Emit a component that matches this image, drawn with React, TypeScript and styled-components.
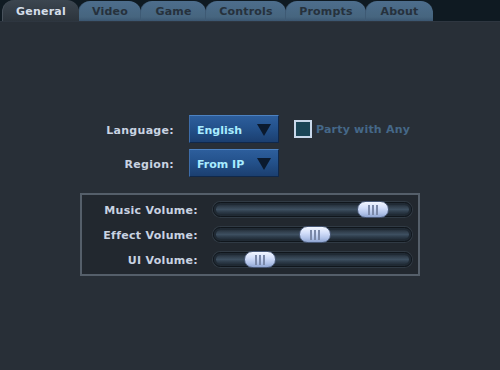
import React from "react";
import styled, { createGlobalStyle } from "styled-components";

const GlobalStyle = createGlobalStyle`
  html, body {
    margin: 0;
    padding: 0;
    background: #282f37;
  }
  body {
    font-family: "DejaVu Sans", Verdana, sans-serif;
  }
`;

const Page = styled.div`
  width: 500px;
  height: 370px;
  background: #282f37;
  overflow: hidden;
`;

const TabBar = styled.div`
  display: flex;
  align-items: flex-end;
  height: 21px;
  padding-left: 2px;
  background: #0f1a22;
  border-bottom: 1px solid #2e3640;
`;

const Tab = styled.div<{ $active?: boolean; $width: number }>`
  display: flex;
  align-items: center;
  justify-content: center;
  width: ${(p) => p.$width}px;
  height: ${(p) => (p.$active ? 21 : 20)}px;
  box-sizing: border-box;
  margin-right: -1px;
  border-radius: 12px 12px 0 0;
  font-size: 11px;
  font-weight: bold;
  letter-spacing: 0.2px;
  color: ${(p) => (p.$active ? "#d4dde8" : "#26313c")};
  background: ${(p) =>
    p.$active
      ? "linear-gradient(#3c4650, #2c343c)"
      : "linear-gradient(#4d6d8c, #46657f 80%, #3b5670)"};
  border-left: 1px solid ${(p) => (p.$active ? "#48525c" : "#3e5a74")};
  z-index: ${(p) => (p.$active ? 2 : 1)};
  padding-top: 1px;
`;

const Content = styled.div`
  padding-top: 93px;
`;

const SettingsGrid = styled.div`
  display: grid;
  grid-template-columns: 174px 90px auto;
  column-gap: 15px;
  row-gap: 6px;
  align-items: center;
`;

const Label = styled.div`
  text-align: right;
  font-size: 11px;
  font-weight: bold;
  letter-spacing: 0.3px;
  color: #c9d3e2;
  padding-top: 2px;
`;

const Dropdown = styled.div`
  position: relative;
  display: flex;
  align-items: center;
  height: 28px;
  box-sizing: border-box;
  padding: 2px 0 0 7px;
  background: linear-gradient(#2d5e9c, #24528c 45%, #1b3f70);
  border: 1px solid #10284a;
  border-top-color: #4d82c0;
  border-left-color: #3d6ca8;
  font-size: 11px;
  font-weight: bold;
  color: #a9ecff;
`;

const Arrow = styled.div`
  position: absolute;
  right: 7px;
  top: 8px;
  width: 0;
  height: 0;
  border-left: 7px solid transparent;
  border-right: 7px solid transparent;
  border-top: 12px solid #0b1a2e;
`;

const CheckRow = styled.label`
  display: flex;
  align-items: center;
  gap: 4px;
  font-size: 11px;
  font-weight: bold;
  letter-spacing: 0.2px;
  color: #456888;
`;

const Checkbox = styled.span`
  width: 18px;
  height: 18px;
  box-sizing: border-box;
  border: 2px solid #c8d8ea;
  background: #1a4556;
`;

const VolumePanel = styled.div`
  margin: 16px 0 0 80px;
  width: 340px;
  height: 83px;
  box-sizing: border-box;
  border: 2px solid #555f6a;
  background: #22282f;
  padding: 7px 0 0 0;
  display: flex;
  flex-direction: column;
  gap: 10px;
`;

const VolumeRow = styled.div`
  display: grid;
  grid-template-columns: 116px 199px;
  column-gap: 15px;
  align-items: center;
  height: 15px;
`;

const Track = styled.div`
  position: relative;
  height: 15px;
  box-sizing: border-box;
  border-radius: 8px;
  border: 1px solid #10161c;
  background: linear-gradient(#1a232c, #32404e 30%, #3d4f60 50%, #2c3a48 70%, #1a232c);
  box-shadow: inset 0 0 0 2px #202a34, 0 0 0 1px #303a44;
`;

const Thumb = styled.div`
  position: absolute;
  top: -2px;
  width: 32px;
  height: 17px;
  box-sizing: border-box;
  border-radius: 9px;
  border: 1px solid #4a5a78;
  background: linear-gradient(#f2f6ff, #d2defa 40%, #b0c2e8 75%, #8fa4d0);
  display: flex;
  align-items: center;
  justify-content: center;
  gap: 2px;
`;

const Grip = styled.span`
  width: 2px;
  height: 10px;
  background: #7a88a8;
`;

const tabs = [
  { name: "General", width: 77 },
  { name: "Video", width: 63 },
  { name: "Game", width: 66 },
  { name: "Controls", width: 81 },
  { name: "Prompts", width: 81 },
  { name: "About", width: 68 },
];

const volumes = [
  { label: "Music Volume:", value: 0.86 },
  { label: "Effect Volume:", value: 0.515 },
  { label: "UI Volume:", value: 0.185 },
];

const Slider: React.FC<{ value: number }> = ({ value }) => (
  <Track>
    <Thumb style={{ left: Math.round(value * 167) - 1 }}>
      <Grip />
      <Grip />
      <Grip />
    </Thumb>
  </Track>
);

export default function App() {
  return (
    <Page>
      <GlobalStyle />
      <TabBar>
        {tabs.map((t, i) => (
          <Tab key={t.name} $active={i === 0} $width={t.width}>
            {t.name}
          </Tab>
        ))}
      </TabBar>
      <Content>
        <SettingsGrid>
          <Label>Language:</Label>
          <Dropdown>
            English
            <Arrow />
          </Dropdown>
          <CheckRow>
            <Checkbox />
            Party with Any
          </CheckRow>
          <Label>Region:</Label>
          <Dropdown>
            From IP
            <Arrow />
          </Dropdown>
          <div />
        </SettingsGrid>
        <VolumePanel>
          {volumes.map((v) => (
            <VolumeRow key={v.label}>
              <Label>{v.label}</Label>
              <Slider value={v.value} />
            </VolumeRow>
          ))}
        </VolumePanel>
      </Content>
    </Page>
  );
}
